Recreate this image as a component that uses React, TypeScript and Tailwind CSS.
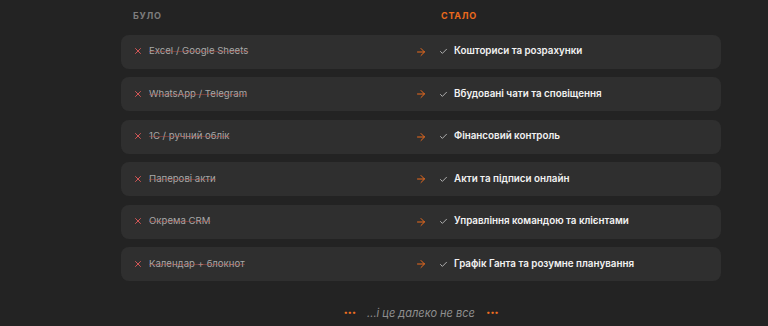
import { Check, X, ArrowRight } from 'lucide-react';

const rows = [
    { before: 'Excel / Google Sheets', after: 'Кошториси та розрахунки' },
    { before: 'WhatsApp / Telegram', after: 'Вбудовані чати та сповіщення' },
    { before: '1С / ручний облік', after: 'Фінансовий контроль' },
    { before: 'Паперові акти', after: 'Акти та підписи онлайн' },
    { before: 'Окрема CRM', after: 'Управління командою та клієнтами' },
    { before: 'Календар + блокнот', after: 'Графік Ганта та розумне планування' },
];

export default function App() {
    return (
        <div className="min-h-[326px] bg-[#232323] font-['Inter',sans-serif]">
            <div className="ml-[121px] w-[600px] pt-[9px]">
                <div className="grid grid-cols-[1fr_12px_1fr] gap-3 px-3 mb-[12px]">
                    <span className="text-[9px] font-bold uppercase tracking-[0.08em] text-[#7d7d7d]">Було</span>
                    <span />
                    <span className="pl-[2px] text-[9px] font-bold uppercase tracking-[0.08em] text-[#ea6a1d]">Стало</span>
                </div>

                <div className="flex flex-col gap-[8.5px]">
                    {rows.map((row) => (
                        <div
                            key={row.before}
                            className="grid h-[34px] grid-cols-[1fr_12px_1fr] items-center gap-3 rounded-lg bg-[#2f2f2f] px-3"
                        >
                            <div className="flex items-center gap-[6px]">
                                <X className="h-[10px] w-[10px] text-[#e05a5a]" strokeWidth={2.2} />
                                <span className="text-[9.6px] text-[#a8a8a8] line-through decoration-[#c0504a]/45">
                                    {row.before}
                                </span>
                            </div>
                            <ArrowRight className="h-3 w-3 text-[#ea6a1d]" strokeWidth={2} />
                            <div className="flex items-center gap-[6px]">
                                <Check className="h-[9px] w-[9px] text-[#bdbdbd]" strokeWidth={2.4} />
                                <span className="text-[9.8px] font-semibold text-[#f2f2f2]">{row.after}</span>
                            </div>
                        </div>
                    ))}
                </div>

                <div className="mt-[24px] flex items-center justify-center gap-[11px]">
                    <span className="text-[12px] font-black leading-none tracking-[-0.02em] text-[#f07020]">···</span>
                    <span className="text-[11px] italic text-[#8f8f8f]">...і це далеко не все</span>
                    <span className="text-[12px] font-black leading-none tracking-[-0.02em] text-[#f07020]">···</span>
                </div>
            </div>
        </div>
    );
}
